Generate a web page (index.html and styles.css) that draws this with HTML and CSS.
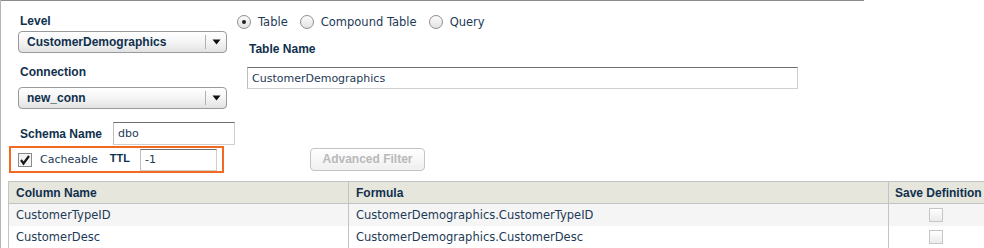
FILE: index.html
```html
<!DOCTYPE html>
<html>
<head>
<meta charset="utf-8">
<link rel="stylesheet" href="styles.css">
</head>
<body>
<div class="panel">
  <div class="topline"></div>
  <div class="form">
    <div class="left">
      <div class="label lvl">Level</div>
      <div class="select"><span class="sel-text">CustomerDemographics</span><span class="sel-arrow"><svg width="9" height="6" viewBox="0 0 9 6"><path d="M0.5 0.5 H8.5 L4.5 5.5 Z" fill="#111"/></svg></span></div>
      <div class="label conn">Connection</div>
      <div class="select"><span class="sel-text">new_conn</span><span class="sel-arrow"><svg width="9" height="6" viewBox="0 0 9 6"><path d="M0.5 0.5 H8.5 L4.5 5.5 Z" fill="#111"/></svg></span></div>
      <div class="schema">
        <span class="label">Schema Name</span>
        <div class="input schema-input">dbo</div>
      </div>
      <div class="cache-box">
        <span class="check">
          <svg width="14" height="14" viewBox="0 0 14 14"><rect x="0.5" y="0.5" width="13" height="13" fill="#f4f4f4" stroke="#8a8a8a"/><path d="M3 7 L5.5 10.5 L11 3" fill="none" stroke="#1a1a1a" stroke-width="2.2"/></svg>
        </span>
        <span class="cache-text">Cacheable</span>
        <span class="label ttl">TTL</span>
        <div class="input ttl-input">-1</div>
      </div>
    </div>
    <div class="right">
      <div class="radios">
        <span class="radio on"><span class="dot"></span></span><span class="rtext">Table</span>
        <span class="radio"></span><span class="rtext">Compound Table</span>
        <span class="radio"></span><span class="rtext">Query</span>
      </div>
      <div class="label tname">Table Name</div>
      <div class="input tname-input">CustomerDemographics</div>
      <div class="btn">Advanced Filter</div>
    </div>
  </div>
  <table class="grid">
    <thead>
      <tr><th class="c1">Column Name</th><th class="c2">Formula</th><th class="c3">Save Definition</th></tr>
    </thead>
    <tbody>
      <tr class="odd"><td>CustomerTypeID</td><td>CustomerDemographics.CustomerTypeID</td><td class="cb"><span class="sbox"></span></td></tr>
      <tr><td>CustomerDesc</td><td>CustomerDemographics.CustomerDesc</td><td class="cb"><span class="sbox"></span></td></tr>
    </tbody>
  </table>
</div>
</body>
</html>
```

FILE: styles.css
```css
html, body { margin: 0; padding: 0; background: #fff; }
body { width: 984px; height: 248px; overflow: hidden; font-family: "DejaVu Sans", Verdana, sans-serif; font-size: 11px; color: #1d3a57; }
.panel { border-left: 1px solid #b5b5b5; height: 248px; position: relative; }
.topline { width: 863px; height: 1px; background: #8c8c8c; }
.form { display: flex; padding-left: 17px; }
.label { font-family: "Liberation Sans", Arial, sans-serif; font-weight: bold; font-size: 12px; color: #10304d; }
.left { width: 218px; display: flex; flex-direction: column; }
.lvl { margin-top: 12px; height: 16px; line-height: 16px; padding-left: 2px; }
.conn { margin-top: 11px; height: 16px; line-height: 16px; padding-left: 2px; }
.select { width: 207px; height: 20px; border: 1px solid #9a9a9a; border-radius: 4px; background: linear-gradient(#ffffff, #f3f3f3 55%, #e2e2e2); display: flex; align-items: center; box-sizing: content-box; font-family: "Liberation Sans", Arial, sans-serif; font-weight: bold; font-size: 12px; color: #10304d; }
.lvl + .select { margin-top: 2px; }
.conn + .select { margin-top: 7px; }
.sel-text { flex: 1; padding-left: 8px; }
.sel-arrow { width: 20px; border-left: 1px solid #b0b0b0; height: 14px; display: flex; align-items: center; justify-content: center; }
.sel-arrow svg { display: block; }
.schema { display: flex; align-items: center; margin-top: 13px; padding-left: 2px; }
.schema .label { width: 93px; }
.input { border: 1px solid #cfcfcf; border-top-color: #6f6f6f; border-left-color: #bdbdbd; background: #fff; padding-left: 4px; box-sizing: border-box; display: flex; align-items: center; color: #1d3a57; }
.schema-input { width: 122px; height: 23px; }
.cache-box { margin-left: -9px; margin-top: 1px; width: 215px; height: 27px; border: 2px solid #f26a22; box-sizing: border-box; display: flex; align-items: center; }
.check { margin-left: 7px; width: 14px; height: 14px; display: block; }
.check svg { display: block; }
.cache-text { margin-left: 8px; }
.ttl { margin-left: 12px; font-size: 11px; position: relative; top: -2px; }
.ttl-input { margin-left: 10px; width: 77px; height: 22px; }
.right { display: flex; flex-direction: column; margin-left: 1px; }
.radios { display: flex; align-items: center; margin-top: 14px; height: 14px; font-size: 11.5px; }
.radio { width: 14px; height: 14px; border-radius: 50%; border: 1px solid #8f8f8f; box-sizing: border-box; background: linear-gradient(#fcfcfc, #e2e2e2); display: flex; align-items: center; justify-content: center; margin-right: 7px; }
.radio .dot { width: 4px; height: 4px; border-radius: 50%; background: #222; }
.rtext { margin-right: 12px; }
.tname { margin-top: 12px; margin-left: 12px; height: 16px; line-height: 16px; }
.tname-input { margin-top: 10px; margin-left: 10px; width: 551px; height: 22px; }
.btn { margin-top: 59px; margin-left: 73px; width: 115px; height: 23px; border: 1px solid #c4c4c4; border-radius: 4px; box-sizing: border-box; background: linear-gradient(#ffffff, #efefef); font-family: "Liberation Sans", Arial, sans-serif; font-weight: bold; font-size: 12px; color: #b9b9b9; text-align: center; line-height: 21px; }
.grid { margin-left: 7px; margin-top: 8px; border-collapse: collapse; table-layout: fixed; width: 990px; }
.grid th, .grid td { height: 22px; padding: 0 0 0 7px; text-align: left; white-space: nowrap; overflow: hidden; box-sizing: border-box; }
.grid th { background: #e6e6dd; border: 1px solid #c3c3c3; font-family: "Liberation Sans", Arial, sans-serif; font-weight: bold; font-size: 12px; color: #10304d; }
.grid td { border-left: 1px solid #c3c3c3; border-right: 1px solid #c3c3c3; font-size: 11.5px; }
.grid .c1 { width: 340px; }
.grid .c2 { width: 540px; }
.grid .c3 { width: 110px; padding-left: 6px; }
.grid tr.odd td { background: #f5f5f5; }
.grid td.cb { padding-left: 40px; }
.sbox { display: block; width: 14px; height: 14px; border: 1px solid #c6c6c6; box-sizing: border-box; background: linear-gradient(#ffffff, #ebebeb); }
```
